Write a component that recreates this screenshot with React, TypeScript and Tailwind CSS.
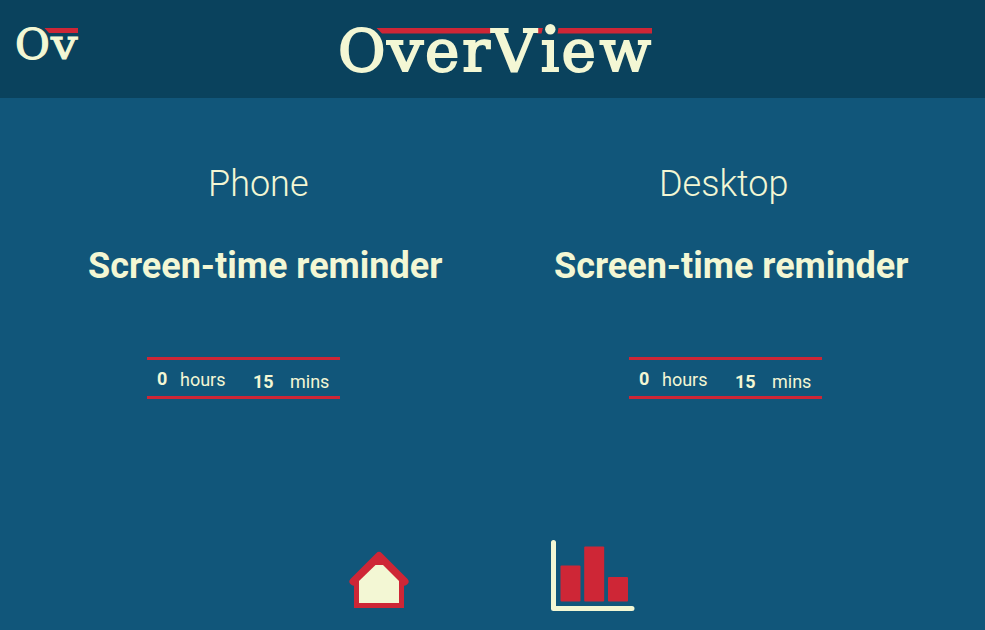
const SERIF = "fill-[#f3f7d4] stroke-[#f3f7d4] font-['DejaVu_Serif',serif]";

function Mark() {
  return (
    <svg className="block h-[98px] w-[100px] shrink-0" viewBox="0 0 100 98" role="img" aria-label="Ov">
      <path d="M44.5 28H78V33H49Z" fill="#ce2636" />
      <text className={SERIF} y="59.3" fontSize="42.5" strokeWidth="1.2">
        <tspan x="15">O</tspan>
        <tspan x="51" textLength="26.500" lengthAdjust="spacingAndGlyphs">v</tspan>
      </text>
    </svg>
  );
}

function Wordmark() {
  return (
    <svg className="block h-[98px] w-[320px] shrink-0" viewBox="336 0 320 98" role="img" aria-label="OverView">
      <path d="M376.5 28H491V33.5H382ZM537 28H543L541.5 33.5H537ZM558.5 28H652V33.5H557.5Z" fill="#ce2636" />
      <text className={SERIF} y="71" fontSize="58" strokeWidth="1.9">
        <tspan x="338">O</tspan>
        <tspan x="387.3" textLength="36" lengthAdjust="spacingAndGlyphs">v</tspan>
        <tspan x="425">e</tspan>
        <tspan x="462.2">r</tspan>
        <tspan x="491.8" textLength="44.500" lengthAdjust="spacingAndGlyphs">V</tspan>
        <tspan x="540.8">i</tspan>
        <tspan x="561.5">e</tspan>
        <tspan x="599.6" textLength="51.500" lengthAdjust="spacingAndGlyphs">w</tspan>
      </text>
      <circle cx="550.3" cy="29.3" r="7.5" fill="#0a425d" />
      <circle cx="550.3" cy="29.3" r="5.2" fill="#f3f7d4" />
    </svg>
  );
}

function Timer() {
  return (
    <div className="flex h-[42px] w-[193px] border-y-[3px] border-[#ce2636] pl-[10px] text-[18px] leading-[21px]">
      <span className="w-[23px] pt-[8px] font-bold">0</span>
      <span className="w-[73px] pt-[9px]">hours</span>
      <span className="w-[37px] pt-[11px] font-bold">15</span>
      <span className="pt-[11px]">mins</span>
    </div>
  );
}

function Home() {
  return (
    <svg className="block h-[60px] w-[60px]" viewBox="349 550 60 60" role="img" aria-label="Home">
      <path d="M354 580L379 556L404 580V608H354Z" fill="#ce2636" />
      <path d="M353.5 581.5L379 556L404.500 581.500" fill="none" stroke="#ce2636" strokeWidth="8" strokeLinecap="round" strokeLinejoin="round" />
      <path d="M359 581L375.500 565H383L399 581V603H359Z" fill="#f3f7d4" />
    </svg>
  );
}

function Chart() {
  return (
    <svg className="block h-[72px] w-[84px]" viewBox="551 540 84 72" role="img" aria-label="Statistics">
      <path d="M553.5 542.5V608.500H632" fill="none" stroke="#f3f7d4" strokeWidth="5" strokeLinecap="round" strokeLinejoin="round" />
      <g fill="#ce2636">
        <rect x="560.5" y="565.5" width="20" height="36" rx="1" />
        <rect x="584.2" y="546.5" width="20" height="55" rx="1" />
        <rect x="608" y="577" width="20" height="24.500" rx="1" />
      </g>
    </svg>
  );
}

export default function App() {
  return (
    <div className="flex h-[630px] w-[985px] flex-col overflow-hidden bg-[#11567a] font-[Roboto,sans-serif] text-[#f3f7d4]">
      <header className="flex h-[98px] shrink-0 bg-[#0a425d]">
        <Mark />
        <div className="pl-[236px]"><Wordmark /></div>
      </header>
      <main className="flex h-[442px] shrink-0">
        <section className="w-[466px] pt-[65px]">
          <h2 className="pl-[208px] text-[36px] leading-[42px] font-light">Phone</h2>
          <h1 className="mt-[40px] pl-[88px] text-[36px] leading-[42px] font-bold whitespace-nowrap">Screen-time reminder</h1>
          <div className="mt-[70px] pl-[147px]"><Timer /></div>
        </section>
        <section className="w-[519px] pt-[65px]">
          <h2 className="pl-[193px] text-[36px] leading-[42px] font-light">Desktop</h2>
          <h1 className="mt-[40px] pl-[88px] text-[36px] leading-[42px] font-bold whitespace-nowrap">Screen-time reminder</h1>
          <div className="mt-[70px] pl-[163px]"><Timer /></div>
        </section>
      </main>
      <nav className="flex">
        <div className="pt-[10px] pl-[349px]"><Home /></div>
        <div className="pl-[142px]"><Chart /></div>
      </nav>
    </div>
  );
}
